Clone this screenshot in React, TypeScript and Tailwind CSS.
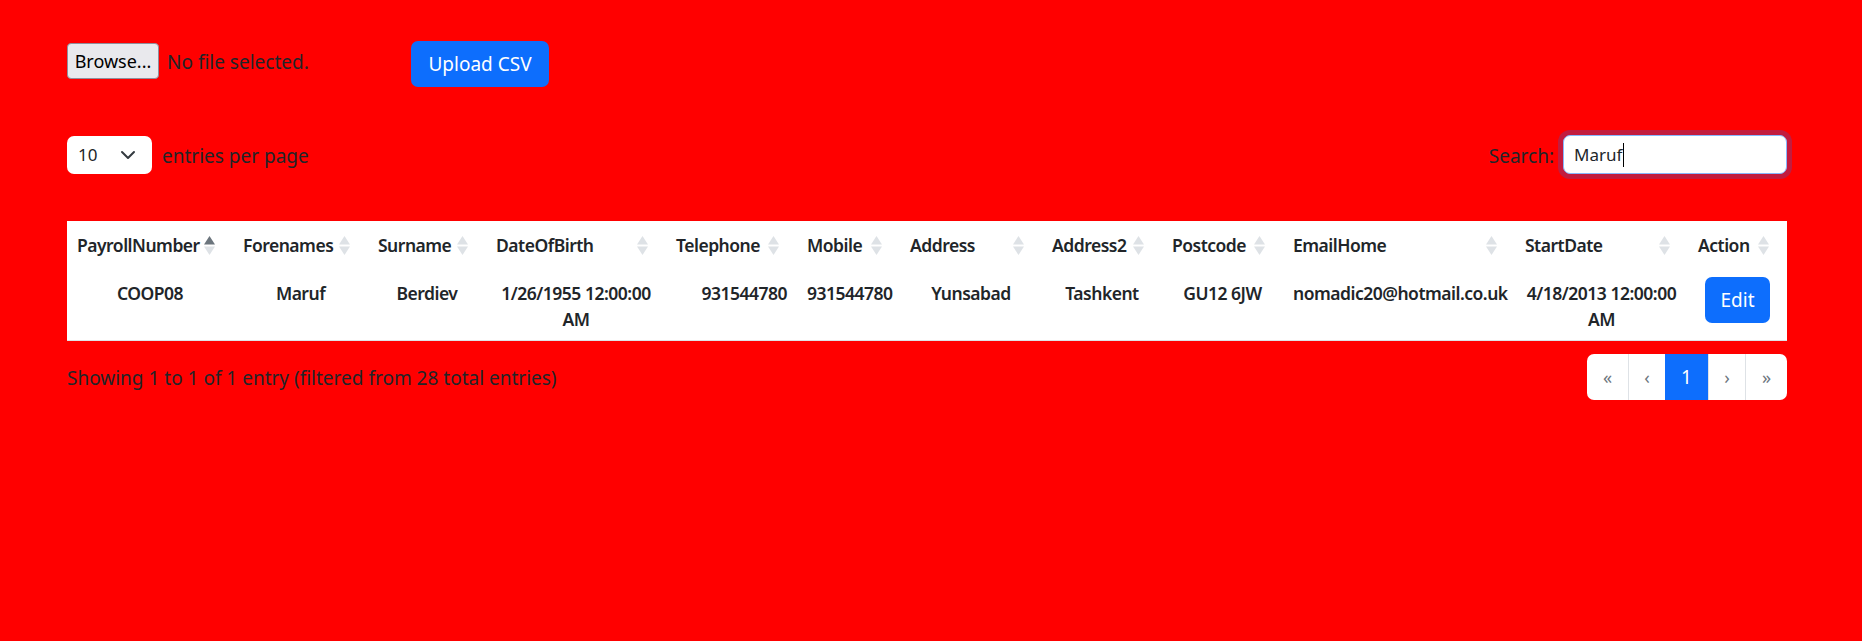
import React from "react";

type Column = { title: string; width: number; active?: boolean };

const columns: Column[] = [
  { title: "PayrollNumber", width: 166, active: true },
  { title: "Forenames", width: 135 },
  { title: "Surname", width: 118 },
  { title: "DateOfBirth", width: 180 },
  { title: "Telephone", width: 131 },
  { title: "Mobile", width: 103 },
  { title: "Address", width: 142 },
  { title: "Address2", width: 120 },
  { title: "Postcode", width: 121 },
  { title: "EmailHome", width: 232 },
  { title: "StartDate", width: 173 },
  { title: "Action", width: 99 },
];

const row = {
  payroll: "COOP08",
  forenames: "Maruf",
  surname: "Berdiev",
  dob: "1/26/1955 12:00:00 AM",
  telephone: "931544780",
  mobile: "931544780",
  address: "Yunsabad",
  address2: "Tashkent",
  postcode: "GU12 6JW",
  email: "nomadic20@hotmail.co.uk",
  start: "4/18/2013 12:00:00 AM",
};

function SortArrows({ active }: { active?: boolean }) {
  return (
    <svg width="11" height="19" viewBox="0 0 11 19" className="mr-[8px] shrink-0">
      <polygon points="5.5,0 11,8.5 0,8.5" fill={active ? "#6c757d" : "#dee2e6"} />
      <polygon points="0,10.5 11,10.5 5.5,19" fill="#dee2e6" />
    </svg>
  );
}

function Chevron() {
  return (
    <svg width="16" height="16" viewBox="0 0 16 16" fill="none">
      <path d="M2 5l6 6 6-6" stroke="#343a40" strokeWidth="2" strokeLinecap="round" strokeLinejoin="round" />
    </svg>
  );
}

export default function App() {
  const pages = ["«", "‹", "1", "›", "»"];

  return (
    <div
      className="min-h-[641px] bg-[#ff0000] pl-[67px] pr-[75px] pt-[41px] text-[19px] text-[#212529]"
      style={{ fontFamily: '"Noto Sans", "Open Sans", sans-serif' }}
    >
      {/* upload row */}
      <div className="flex items-start">
        <div className="flex w-[344px] items-center pt-[2px]">
          <button className="h-[36px] w-[92px] rounded-[4px] border border-[#8f8f9d] bg-[#e9e9ed] text-[18px] text-black">
            Browse...
          </button>
          <span className="ml-[8px] pt-[3px]">No file selected.</span>
        </div>
        <button className="h-[46px] w-[138px] rounded-[7px] bg-[#0d6efd] text-[19px] text-white">
          Upload CSV
        </button>
      </div>

      {/* controls row */}
      <div className="mt-[48px] flex items-center justify-between">
        <div className="flex items-center">
          <div className="flex h-[38px] w-[85px] items-center justify-between rounded-[7px] bg-white pl-[11px] pr-[16px] text-[17px]">
            <span>10</span>
            <Chevron />
          </div>
          <span className="ml-[10px] pt-[3px]">entries per page</span>
        </div>
        <div className="flex items-center">
          <span className="mr-[9px] pt-[3px]">Search:</span>
          <div className="flex h-[39px] w-[224px] items-center rounded-[7px] border border-[#86b7fe] bg-white pl-[10px] text-[17px] shadow-[0_0_0_5px_rgba(13,110,253,0.25)]">
            <span>Maruf</span>
            <span className="ml-px inline-block h-[24px] w-px bg-black" />
          </div>
        </div>
      </div>

      {/* table */}
      <table className="mt-[47px] w-[1720px] table-fixed border-collapse bg-white text-[17.5px] tracking-[-0.5px]">
        <colgroup>
          {columns.map((c) => (
            <col key={c.title} style={{ width: c.width }} />
          ))}
        </colgroup>
        <thead>
          <tr>
            {columns.map((c) => (
              <th key={c.title} className="h-[46px] px-[10px] pt-[2px] text-left align-middle font-semibold">
                <div className="flex items-center justify-between">
                  <span className="whitespace-nowrap">{c.title}</span>
                  <SortArrows active={c.active} />
                </div>
              </th>
            ))}
          </tr>
        </thead>
        <tbody>
          <tr className="border-b border-[#dee2e6] align-top font-semibold leading-[26px]">
            <td className="px-[10px] pb-[8px] pt-[13px] text-center">{row.payroll}</td>
            <td className="px-[10px] pb-[8px] pt-[13px] text-center">{row.forenames}</td>
            <td className="px-[10px] pb-[8px] pt-[13px] text-center">{row.surname}</td>
            <td className="px-[10px] pb-[8px] pt-[13px] text-center">{row.dob}</td>
            <td className="px-[10px] pb-[8px] pt-[13px] text-right">{row.telephone}</td>
            <td className="px-[10px] pb-[8px] pt-[13px] text-right">{row.mobile}</td>
            <td className="px-[10px] pb-[8px] pt-[13px] text-center">{row.address}</td>
            <td className="px-[10px] pb-[8px] pt-[13px] text-center">{row.address2}</td>
            <td className="px-[10px] pb-[8px] pt-[13px] text-center">{row.postcode}</td>
            <td className="px-[10px] pb-[8px] pt-[13px] text-center">{row.email}</td>
            <td className="px-[10px] pb-[8px] pt-[13px] text-center">{row.start}</td>
            <td className="px-[10px] pb-[8px] pt-[10px] text-center">
              <button className="h-[46px] w-[65px] rounded-[7px] bg-[#0d6efd] text-[19px] font-normal tracking-normal text-white">
                Edit
              </button>
            </td>
          </tr>
        </tbody>
      </table>

      {/* footer row */}
      <div className="mt-[13px] flex items-center justify-between">
        <span className="pt-[3px]">Showing 1 to 1 of 1 entry (filtered from 28 total entries)</span>
        <div className="flex h-[46px] overflow-hidden rounded-[7px] bg-white">
          {pages.map((p, i) => (
            <div
              key={i}
              className={
                p === "1"
                  ? "flex w-[43px] items-center justify-center bg-[#0d6efd] text-[19px] text-white"
                  : i === 0
                  ? "flex w-[41px] items-center justify-center text-[18px] text-[#6c757d]"
                  : i === 4
                  ? "flex w-[42px] items-center justify-center border-l border-[#dee2e6] text-[18px] text-[#6c757d]"
                  : "flex w-[37px] items-center justify-center border-l border-[#dee2e6] text-[18px] text-[#6c757d]"
              }
            >
              {p}
            </div>
          ))}
        </div>
      </div>
    </div>
  );
}
